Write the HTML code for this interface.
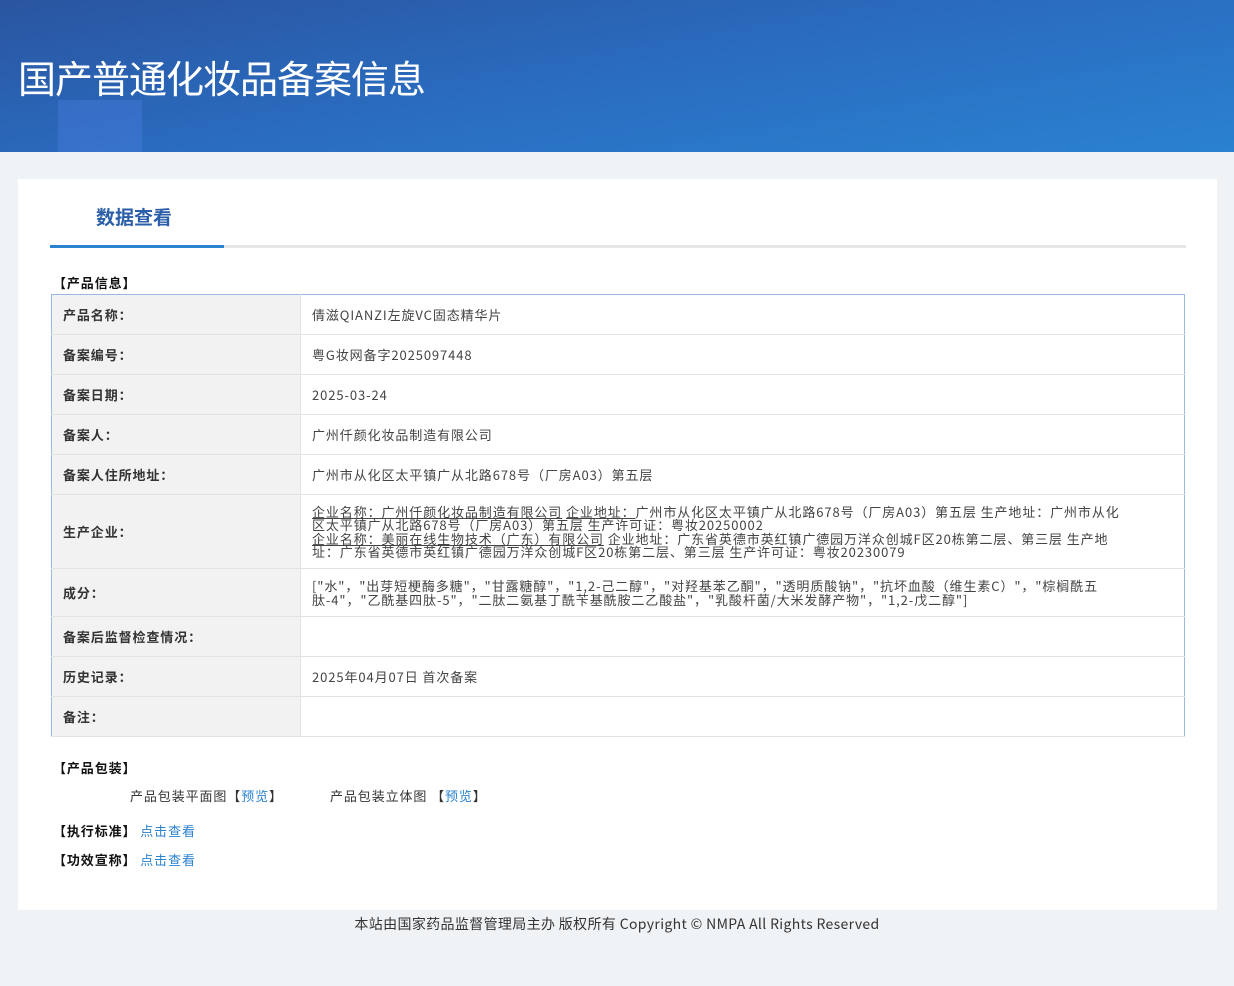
<!DOCTYPE html>
<html><head><meta charset="utf-8"><style>
*{margin:0;padding:0;box-sizing:border-box}
body{width:1234px;height:986px;background:#eff3f6;font-family:"Noto Sans CJK SC","Liberation Sans",sans-serif;color:#333;position:relative;overflow:hidden}
.hd{position:absolute;left:0;top:0;width:1234px;height:152px;background:linear-gradient(170deg,#2a55a0 0%,#2a6cc0 50%,#2a82d0 100%);overflow:hidden}
.hd h1{position:absolute;left:18px;top:52px;font-size:38px;font-weight:normal;color:#fff;letter-spacing:-1px;font-family:"Noto Sans CJK SC",sans-serif;line-height:50px}
.blk{position:absolute;left:58px;top:100px;width:84px;height:60px;background:rgba(80,130,230,.35)}
.card{position:absolute;left:18px;top:179px;width:1199px;height:731px;background:#fff;letter-spacing:0.9px}
.tab{position:absolute;left:78px;top:24px;font-size:19px;font-weight:bold;color:#2a5ea8;letter-spacing:0}
.line{position:absolute;left:32px;top:66px;width:1136px;height:3px;background:#e6e6e6}
.line b{position:absolute;left:0;top:0;width:174px;height:3px;background:#2a82d0}
.sec{position:absolute;font-size:13px;font-weight:bold;color:#111;line-height:18px}
table{position:absolute;left:33px;top:115px;width:1134px;border-collapse:collapse;border:1px solid #9ab8e0;font-size:13px}
td{border-bottom:1px solid #e3e3e3;height:40px;vertical-align:middle}
td.l{width:249px;background:#f2f2f2;padding-left:11px;font-weight:bold;color:#333;border-right:1px solid #e3e3e3}
td.v{padding-left:11px;color:#444}
.sm{line-height:13.5px;font-size:13px}
.sm u{text-decoration:underline}
a{color:#2a82d0;text-decoration:none}
.ft{position:absolute;top:914px;left:0;width:1234px;text-align:center;font-size:14px;color:#333;letter-spacing:0.35px}
</style></head><body>
<div class="hd"><div class="blk"></div><h1>国产普通化妆品备案信息</h1></div>
<div class="card">
<div class="tab">数据查看</div>
<div class="line"><b></b></div>
<div class="sec" style="left:35px;top:95px">【产品信息】</div>
<table>
<tr><td class="l">产品名称：</td><td class="v">倩滋QIANZI左旋VC固态精华片</td></tr>
<tr><td class="l">备案编号：</td><td class="v">粤G妆网备字2025097448</td></tr>
<tr><td class="l">备案日期：</td><td class="v">2025-03-24</td></tr>
<tr><td class="l">备案人：</td><td class="v">广州仟颜化妆品制造有限公司</td></tr>
<tr><td class="l">备案人住所地址：</td><td class="v">广州市从化区太平镇广从北路678号（厂房A03）第五层</td></tr>
<tr><td class="l" style="height:74px">生产企业：</td><td class="v sm"><u>企业名称：广州仟颜化妆品制造有限公司</u> <u>企业地址：</u>广州市从化区太平镇广从北路678号（厂房A03）第五层 生产地址：广州市从化<br>区太平镇广从北路678号（厂房A03）第五层 生产许可证：粤妆20250002<br><u>企业名称：美丽在线生物技术（广东）有限公司</u> 企业地址：广东省英德市英红镇广德园万洋众创城F区20栋第二层、第三层 生产地<br>址：广东省英德市英红镇广德园万洋众创城F区20栋第二层、第三层 生产许可证：粤妆20230079</td></tr>
<tr><td class="l" style="height:48px">成分：</td><td class="v sm">["水"，"出芽短梗酶多糖"，"甘露糖醇"，"1,2-己二醇"，"对羟基苯乙酮"，"透明质酸钠"，"抗坏血酸（维生素C）"，"棕榈酰五<br>肽-4"，"乙酰基四肽-5"，"二肽二氨基丁酰苄基酰胺二乙酸盐"，"乳酸杆菌/大米发酵产物"，"1,2-戊二醇"]</td></tr>
<tr><td class="l">备案后监督检查情况：</td><td class="v"></td></tr>
<tr><td class="l">历史记录：</td><td class="v">2025年04月07日 首次备案</td></tr>
<tr><td class="l">备注：</td><td class="v"></td></tr>
</table>
<div class="sec" style="left:35px;top:580px">【产品包装】</div>
<div style="position:absolute;left:112px;top:608px;font-size:13px;line-height:18px">产品包装平面图【<a>预览</a>】</div>
<div style="position:absolute;left:312px;top:608px;font-size:13px;line-height:18px">产品包装立体图 【<a>预览</a>】</div>
<div class="sec" style="left:35px;top:643px">【执行标准】 <a style="font-weight:normal">点击查看</a></div>
<div class="sec" style="left:35px;top:672px">【功效宣称】 <a style="font-weight:normal">点击查看</a></div>
</div>
<div class="ft">本站由国家药品监督管理局主办 版权所有 Copyright © NMPA All Rights Reserved</div>
</body></html>
